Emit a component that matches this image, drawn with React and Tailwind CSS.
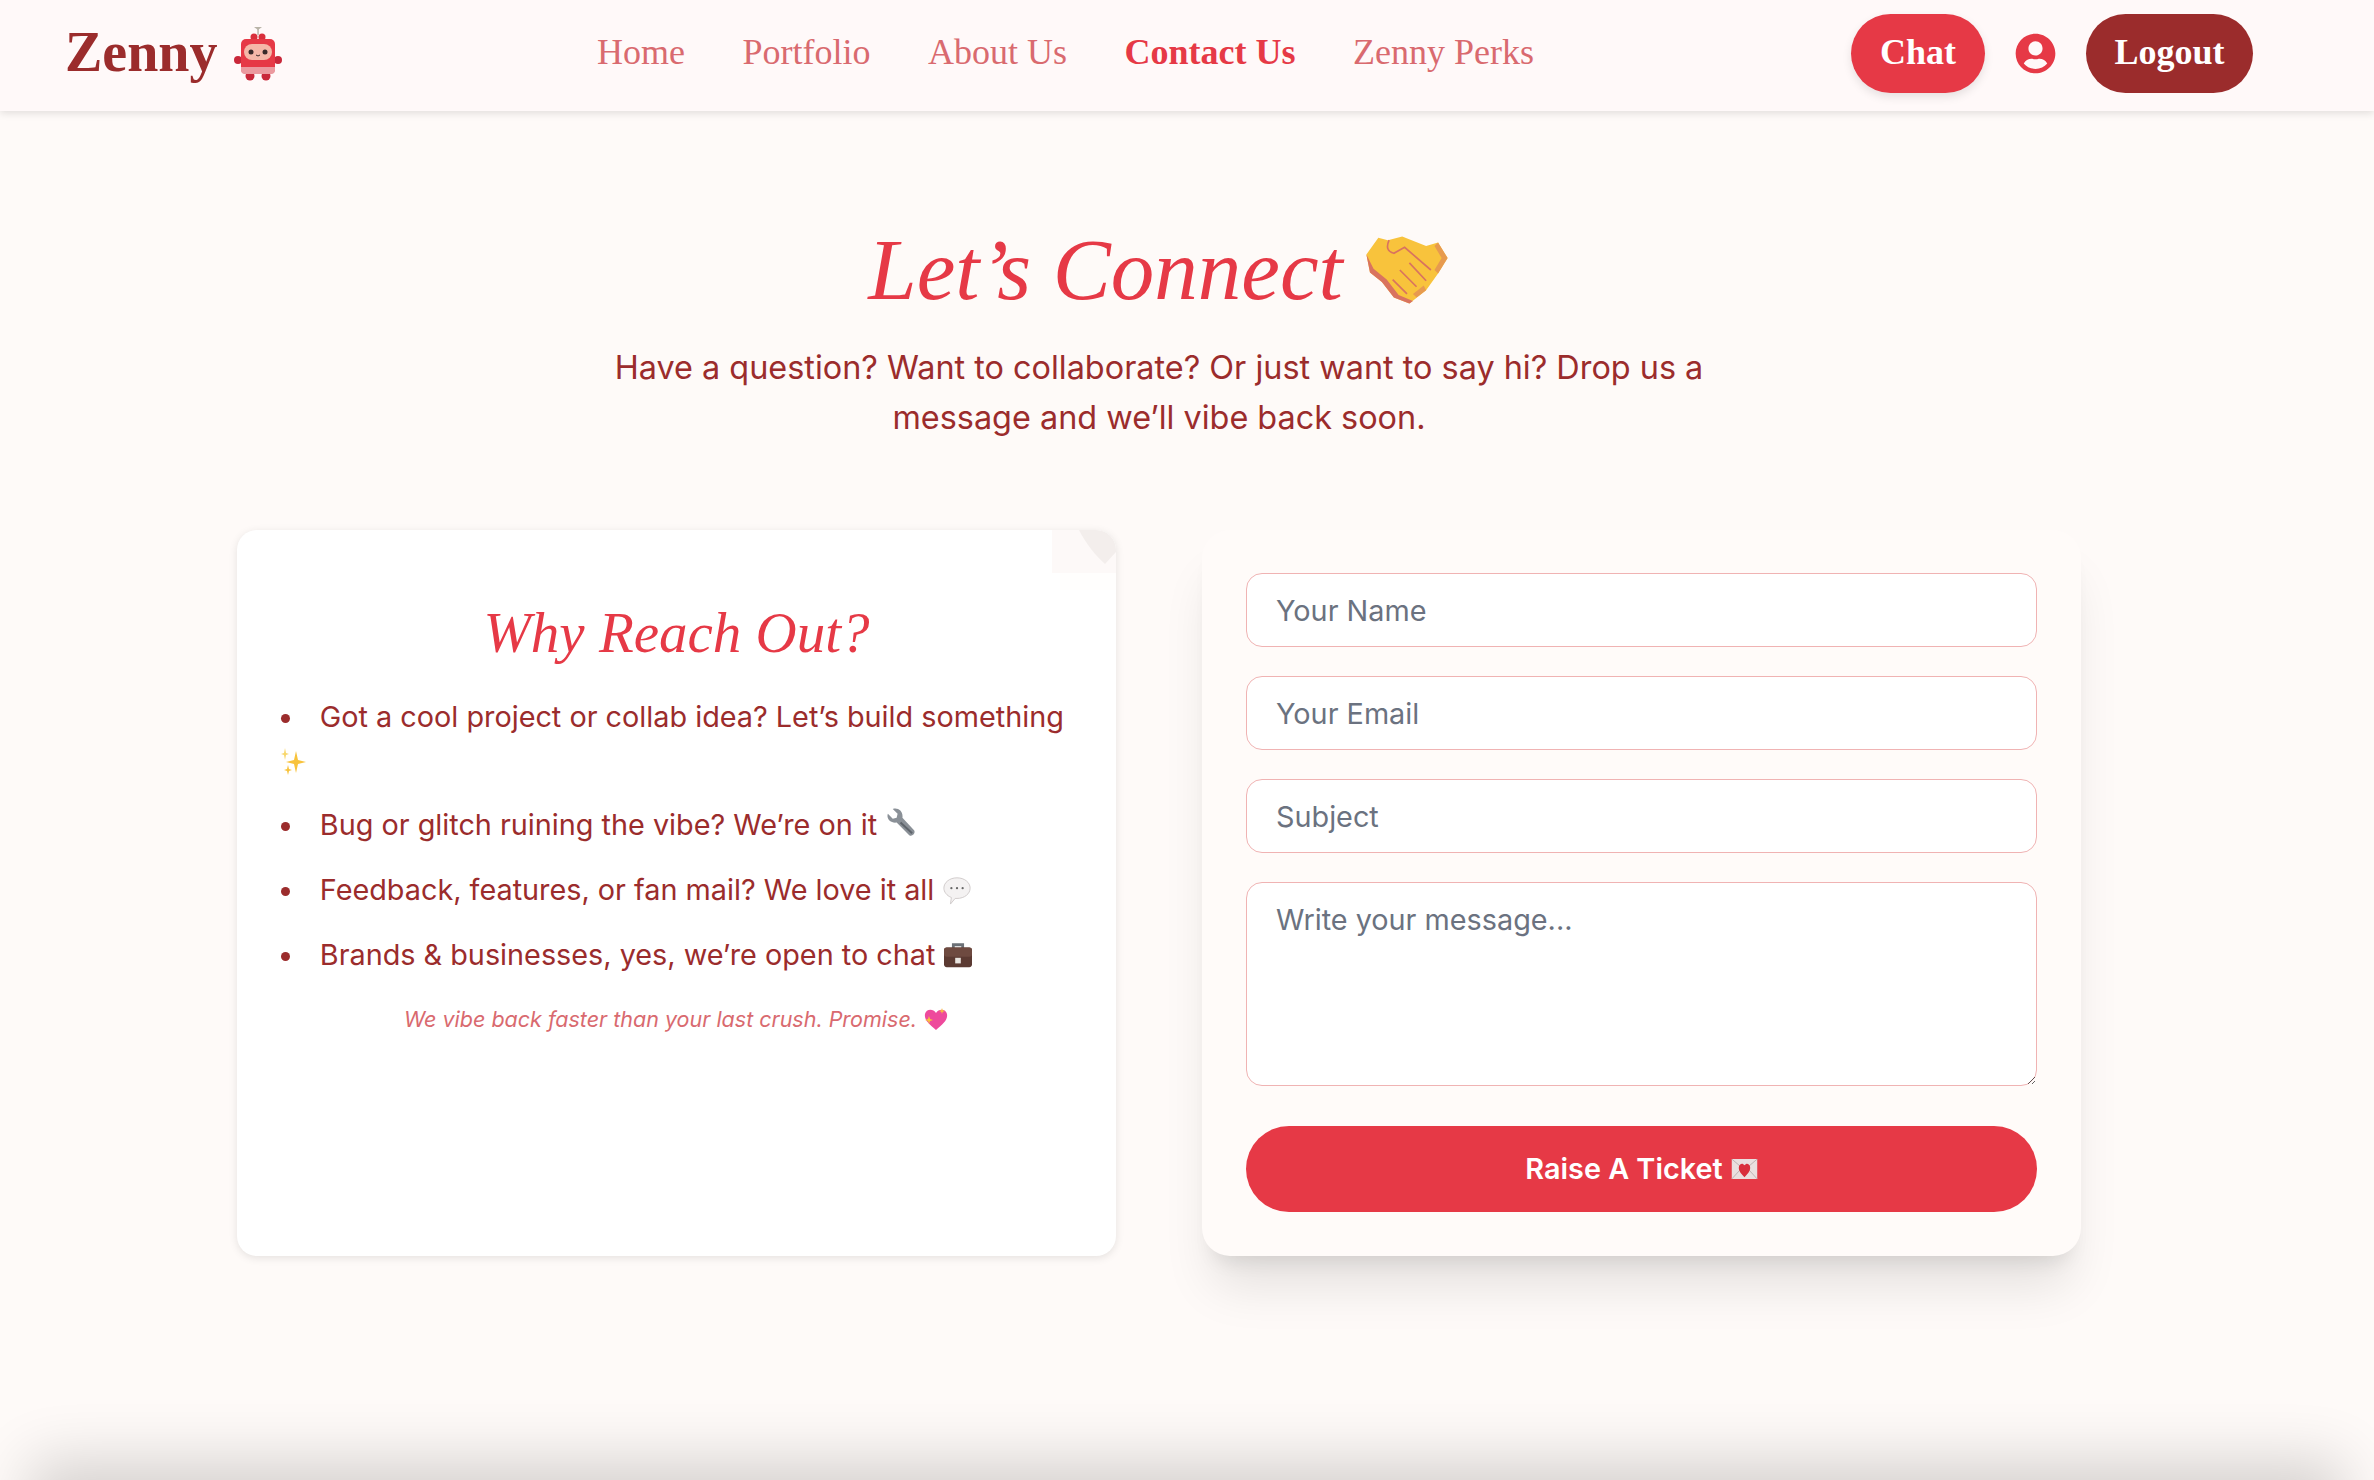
import { FaUserCircle } from "react-icons/fa";

const Robot = () => (
  <svg width="48" height="54" viewBox="0 0 48 54" className="shrink-0">
    <path d="M20 0l4 3 4-3z" fill="#b9b4a8" />
    <rect x="23.300" y="2" width="1.500" height="6" fill="#b9b4a8" />
    <circle cx="20" cy="10" r="3.500" fill="#d92f3c" />
    <circle cx="28" cy="10" r="3.500" fill="#d92f3c" />
    <circle cx="4" cy="33" r="4" fill="#c9283a" />
    <circle cx="44" cy="33" r="4" fill="#c9283a" />
    <circle cx="16" cy="49" r="4.500" fill="#c9283a" />
    <circle cx="32" cy="49" r="4.500" fill="#c9283a" />
    <rect x="7" y="12" width="34" height="35" rx="5" fill="#e63946" />
    <path d="M7 40h34v3a4 4 0 0 1-4 4H11a4 4 0 0 1-4-4z" fill="#eb9a9f" />
    <rect x="10" y="17" width="28" height="16" rx="8" fill="#f5b7a8" />
    <circle cx="17" cy="25" r="2.500" fill="#3a2a2a" />
    <circle cx="31" cy="25" r="2.500" fill="#3a2a2a" />
    <path d="M22 28q2 2 4 0" stroke="#3a2a2a" strokeWidth="1" fill="none" />
  </svg>
);

const Handshake = () => (
  <svg width="86" height="72" viewBox="0 0 72 60" className="shrink-0">
    <path d="M2 17L12 3l8 2 12-3 20 8 10-3 8 13-8 13-10 14-14 11-13-5-10-13-10-8z" fill="#f8c33c" />
    <path d="M2 17l3 15 10 8 10 13 13 5 3-2-12-5-10-13-11-9z" fill="#d9735f" />
    <path d="M62 7l8 13-8 13-3-3 6-10-6-10zM52 47l-8 6-3-3 9-7z" fill="#e79a4f" />
    <path d="M21 5q-4 9 4 11l9-5 22 19M38 24l14 15M30 30l14 14M24 38l12 12" stroke="#d9735f" strokeWidth="1.400" fill="none" />
  </svg>
);

const Sparkles = () => (
  <svg width="28" height="30" viewBox="0 0 28 30" className="inline-block align-middle">
    <path d="M15 4l2 9 8 2-8 2-2 9-2-9-8-2 8-2z" fill="#f8c33c" />
    <path d="M4 1l1 5 3 1-3 1-1 5-1-5-3-1 3-1z" fill="#f8d76b" />
    <path d="M7 18l1 4 3 1-3 1-1 4-1-4-3-1 3-1z" fill="#f8c33c" />
  </svg>
);

const Wrench = () => (
  <svg width="31" height="31" viewBox="0 0 32 32" className="inline-block align-[-4px]">
    <path d="M3 6l5 5 4-1 1-4-5-5c5-2 11 2 10 9L30 23c2 3-2 7-5 5L12 15C6 16 1 11 3 6z" fill="#8a9097" />
    <path d="M16 15l12 11" stroke="#5e646b" strokeWidth="2" />
  </svg>
);

const Bubble = () => (
  <svg width="30" height="30" viewBox="0 0 32 32" className="inline-block align-[-5px]">
    <path d="M16 3c8 0 14 5 14 11s-6 11-14 11h-2l-5 6 1-7C5 22 2 18 2 14 2 8 8 3 16 3z" fill="#f4f2f2" stroke="#cfcaca" />
    <circle cx="10" cy="14" r="1.200" fill="#666" />
    <circle cx="16" cy="14" r="1.200" fill="#666" />
    <circle cx="22" cy="14" r="1.200" fill="#666" />
  </svg>
);

const Briefcase = () => (
  <svg width="30" height="28" viewBox="0 0 32 30" className="inline-block align-[-4px]">
    <path d="M11 8V4h10v4" stroke="#6b7076" strokeWidth="3" fill="none" />
    <rect x="1" y="7" width="30" height="21" rx="3" fill="#5b3a32" />
    <rect x="1" y="7" width="30" height="10" rx="3" fill="#6e4a40" />
    <rect x="13" y="18" width="6" height="6" fill="#e8e4df" />
  </svg>
);

const SparkHeart = () => (
  <svg width="26" height="26" viewBox="0 0 26 26" className="inline-block align-[-5px]">
    <path d="M13 24C6 18 1 14 2 8c1-5 8-6 11-1 3-5 10-4 11 1 1 6-4 10-11 16z" fill="#ee4a9c" />
    <path d="M6 10l1 3 3 1-3 1-1 3-1-3-3-1 3-1z" fill="#f8c33c" />
    <path d="M19 2l.7 2.300L22 5l-2.300.7L19 8l-.7-2.300L16 5l2.300-.7z" fill="#f8c33c" />
  </svg>
);

const LoveLetter = () => (
  <svg width="27" height="20" viewBox="0 0 28 22" className="inline-block">
    <rect width="28" height="22" fill="#eadfdf" />
    <path d="M0 0l14 12L28 0M0 22l10-11M28 22L18 11" stroke="#b9aeae" strokeWidth="1" fill="none" />
    <path d="M14 20C9 15 7 12 8 8c1-3 4-4 6-1 2-3 5-2 6 1 1 4-1 7-6 12z" fill="#d92f3c" />
  </svg>
);

const CornerLeaf = () => (
  <svg width="64" height="60" viewBox="0 0 64 60" className="absolute right-0 top-0">
    <path d="M0 0h64v43H0z" fill="#fdf9f8" />
    <path d="M8 43h56v17H8z" fill="#fffefd" />
    <path d="M27 0h37v22l-11 12C44 26 34 14 27 0z" fill="#f3eeec" />
  </svg>
);

const fieldClass =
  "w-full rounded-[16px] border border-[#f0b3b3] bg-white px-[29px] font-['Inter',sans-serif] text-[28.8px] text-[#374151] placeholder:text-[#6b7280] outline-none";

export default function App() {
  return (
    <div className="h-[1480px] overflow-hidden bg-[#fefaf8] font-['Inter',sans-serif]">
      {/* Navbar */}
      <nav className="relative z-10 flex h-[111px] w-full items-center bg-[#fff9f9] pb-[4px] pl-[65px] pr-[121px] shadow-[0_2px_8px_rgba(0,0,0,0.12)] font-['Liberation_Serif',serif]">
        <div className="flex w-[532px] items-center gap-[16px]">
          <span className="pb-[3px] text-[56px] font-bold leading-none text-[#9b2c2c]">Zenny</span>
          <Robot />
        </div>
        <div className="flex items-center gap-[57.5px] pb-[3px] text-[36px] text-[#d96a6f]">
          <a>Home</a>
          <a>Portfolio</a>
          <a>About Us</a>
          <a className="font-bold text-[#e63946]">Contact Us</a>
          <a>Zenny Perks</a>
        </div>
        <div className="ml-auto flex items-center">
          <button className="flex h-[79px] w-[134px] items-center justify-center rounded-[40px] bg-[#e63946] pb-[3px] text-[36px] font-bold text-white shadow-[0_4px_10px_rgba(0,0,0,0.1)]">
            Chat
          </button>
          <FaUserCircle className="mx-[30px] h-[41px] w-[41px] text-[#e63946]" />
          <button className="flex h-[79px] w-[167px] items-center justify-center rounded-[40px] bg-[#9b2c2c] pb-[3px] text-[36px] font-bold text-white">
            Logout
          </button>
        </div>
      </nav>

      {/* Main */}
      <main className="h-[1369px] w-[2318px] px-[237px]">
        <section className="flex flex-col items-center pt-[109px]">
          <h1 className="flex h-[100px] items-center gap-[21px] font-['Liberation_Serif',serif] text-[87px] italic leading-[100px] text-[#e63946]">
            Let’s Connect
            <Handshake />
          </h1>
          <p className="mt-[23px] w-[1150px] text-center text-[32.4px] leading-[50px] text-[#9b2c2c]">
            Have a question? Want to collaborate? Or just want to say hi? Drop us a message and we’ll vibe back soon.
          </p>
        </section>

        <div className="mt-[87px] grid h-[726px] grid-cols-2 gap-[86px]">
          {/* Why Reach Out */}
          <div className="relative overflow-hidden rounded-[20px] bg-white px-[44px] pt-[68px] shadow-[0_2px_8px_rgba(0,0,0,0.1)]">
            <CornerLeaf />
            <h2 className="relative text-center font-['Liberation_Serif',serif] text-[57px] italic leading-[70px] text-[#e63946]">
              Why Reach Out?
            </h2>
            <ul className="mt-[27px] list-inside list-disc text-[28.8px] leading-[43px] text-[#9b2c2c]">
              <li className="mb-[22px]">
                Got a cool project or collab idea? Let’s build something <Sparkles />
              </li>
              <li className="mb-[22px]">
                Bug or glitch ruining the vibe? We’re on it <Wrench />
              </li>
              <li className="mb-[22px]">
                Feedback, features, or fan mail? We love it all <Bubble />
              </li>
              <li>
                Brands & businesses, yes, we’re open to chat <Briefcase />
              </li>
            </ul>
            <p className="mt-[27px] text-center text-[21.5px] italic text-[#d96a6f]">
              We vibe back faster than your last crush. Promise. <SparkHeart />
            </p>
          </div>

          {/* Form */}
          <form className="flex flex-col rounded-[28px] bg-[#fffbf9] px-[44px] pt-[43px] shadow-[0_40px_50px_-10px_rgba(0,0,0,0.1),0_16px_20px_-12px_rgba(0,0,0,0.1)]">
            <input className={`${fieldClass} h-[74px]`} placeholder="Your Name" />
            <input className={`${fieldClass} mt-[29px] h-[74px]`} placeholder="Your Email" />
            <input className={`${fieldClass} mt-[29px] h-[74px]`} placeholder="Subject" />
            <textarea className={`${fieldClass} mt-[29px] h-[204px] py-[15px]`} placeholder="Write your message..." />
            <button
              type="button"
              className="mt-[40px] flex h-[86px] w-full items-center justify-center gap-[8px] rounded-full bg-[#e63946] text-[28.8px] font-semibold text-white"
            >
              Raise A Ticket <LoveLetter />
            </button>
          </form>
        </div>
      </main>

      {/* Footer sits just under the fold, only its shadow shows */}
      <footer className="relative mx-[30px] h-[100px] bg-[#fefaf8] shadow-[0_-20px_60px_rgba(0,0,0,0.16)]" />
    </div>
  );
}
